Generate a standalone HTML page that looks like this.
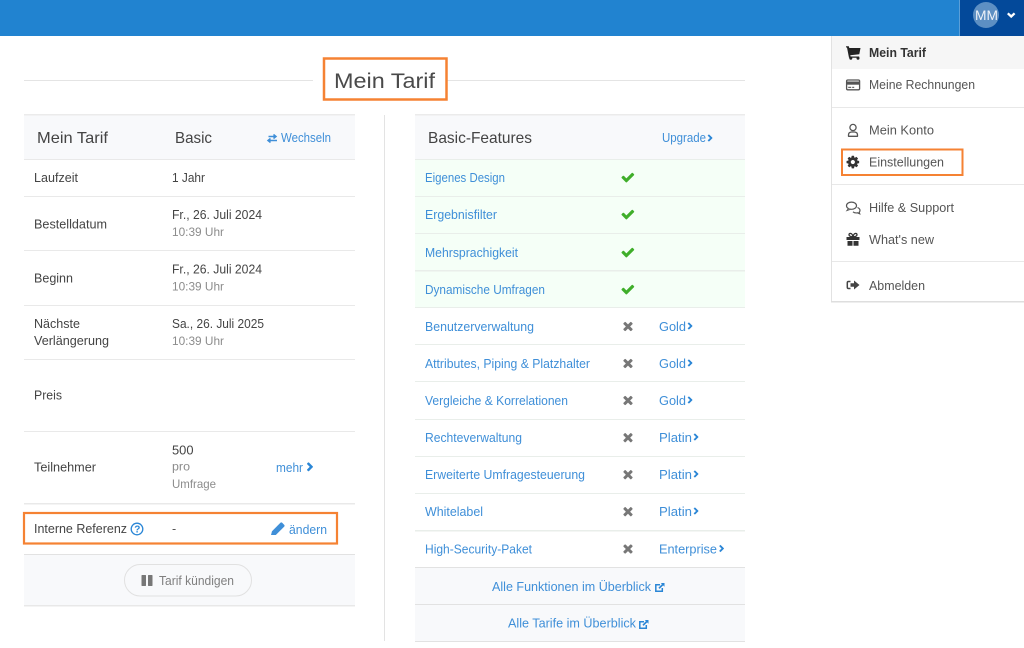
<!DOCTYPE html>
<html lang="de"><head><meta charset="utf-8"><title>Mein Tarif</title>
<style>
html,body{margin:0;padding:0;background:#fff;width:1024px;height:648px;overflow:hidden}
svg{display:block;position:absolute;left:0;top:0;filter:blur(.25px)}
text{font-family:"Liberation Sans",sans-serif;font-size:12.5px;fill:#444}
.h{font-size:16px;fill:#444}
.g{fill:#8c8c8c;font-size:12px}
.l{fill:#3f8fd8}
.m{fill:#555}
</style></head><body>
<svg width="1024" height="648" viewBox="0 0 1024 648" xmlns="http://www.w3.org/2000/svg">
<defs>
<path id="chk" d="M1671 566q0 40-28 68l-724 724-136 136q-28 28-68 28t-68-28l-136-136-362-362q-28-28-28-68t28-68l136-136q28-28 68-28t68 28l294 295 656-657q28-28 68-28t68 28l136 136q28 28 28 68z"/>
<path id="tim" d="M1490 1322q0 40-28 68l-136 136q-28 28-68 28t-68-28l-294-294-294 294q-28 28-68 28t-68-28l-136-136q-28-28-28-68t28-68l294-294-294-294q-28-28-28-68t28-68l136-136q28-28 68-28t68 28l294 294 294-294q28-28 68-28t68 28l136 136q28 28 28 68t-28 68l-294 294 294 294q28 28 28 68z"/>
<path id="chv" d="M1363 877l-742 742q-19 19-45 19t-45-19l-166-166q-19-19-19-45t19-45l531-531-531-531q-19-19-19-45t19-45l166-166q19-19 45-19t45 19l742 742q19 19 19 45t-19 45z" stroke="#2a86d6" stroke-width="110"/>
<g id="ext">
<path d="M660 584.700h-4.200v6.500h6.500v-3.200" fill="none" stroke="#2a86d6" stroke-width="1.500"/>
<path d="M659 588.300l3.700-3.700" fill="none" stroke="#2a86d6" stroke-width="1.700"/>
<path d="M660.800 583h3.700v3.700z" fill="#2a86d6"/>
</g>
</defs>

<!-- navbar -->
<rect width="1024" height="36" fill="#2183d0"/>
<rect x="959" width="1" height="36" fill="#5a9fd8"/>
<rect x="960" width="64" height="36" fill="#03499a"/>
<circle cx="986" cy="15" r="13" fill="#5d8fc3"/>
<text x="975" y="20" textLength="23" lengthAdjust="spacingAndGlyphs" style="font-size:13.500px;fill:#eef2f8">MM</text>
<path d="M1007.800 13.300l3.400 3.200 3.400-3.200" fill="none" stroke="#fff" stroke-width="2.300"/>

<!-- title -->
<rect x="24" y="80" width="289" height="1" fill="#e4e4e4"/>
<rect x="447" y="80" width="298" height="1" fill="#e4e4e4"/>
<rect x="324" y="58.500" width="122.500" height="41" fill="#fff" stroke="#f58233" stroke-width="2.500"/>
<text x="334" y="88" textLength="101" lengthAdjust="spacingAndGlyphs" style="font-size:21.500px;fill:#4a4a4a">Mein Tarif</text>

<!-- divider -->
<rect x="384" y="115" width="1" height="526" fill="#e3e3e3"/>

<!-- left table -->
<rect x="24" y="114" width="331" height="46" fill="#f8f9fb"/>
<rect x="24" y="114" width="331" height="1.500" fill="#ebebeb"/>
<g fill="#e9e9e9">
<rect x="24" y="159" width="331" height="1"/>
<rect x="24" y="196" width="331" height="1"/>
<rect x="24" y="250" width="331" height="1"/>
<rect x="24" y="305" width="331" height="1"/>
<rect x="24" y="359" width="331" height="1"/>
<rect x="24" y="431" width="331" height="1"/>
<rect x="24" y="503" width="331" height="1.500"/>
</g>
<rect x="24" y="554" width="331" height="52" fill="#f8f9fb"/>
<rect x="24" y="554" width="331" height="1" fill="#e2e2e2"/>
<rect x="24" y="605" width="331" height="1.500" fill="#e8e8e8"/>

<text class="h" x="37" y="143" textLength="71" lengthAdjust="spacingAndGlyphs">Mein Tarif</text>
<text class="h" x="175" y="143" textLength="37" lengthAdjust="spacingAndGlyphs">Basic</text>
<path d="M268.500 136.500h7M273.500 134.500l2.500 2-2.500 2M277 140.500h-8M270.500 138.500l-2.500 2 2.500 2" fill="none" stroke="#3f8fd8" stroke-width="1.500"/>
<text class="l" x="281" y="142" textLength="50" lengthAdjust="spacingAndGlyphs">Wechseln</text>

<text x="34" y="182" textLength="44" lengthAdjust="spacingAndGlyphs">Laufzeit</text>
<text x="172" y="182" textLength="33" lengthAdjust="spacingAndGlyphs">1 Jahr</text>

<text x="34" y="228.500" textLength="73" lengthAdjust="spacingAndGlyphs">Bestelldatum</text>
<text x="172" y="219" textLength="90" lengthAdjust="spacingAndGlyphs">Fr., 26. Juli 2024</text>
<text class="g" x="172" y="236" textLength="52" lengthAdjust="spacingAndGlyphs">10:39 Uhr</text>

<text x="34" y="282.500" textLength="39" lengthAdjust="spacingAndGlyphs">Beginn</text>
<text x="172" y="273.500" textLength="90" lengthAdjust="spacingAndGlyphs">Fr., 26. Juli 2024</text>
<text class="g" x="172" y="290.500" textLength="52" lengthAdjust="spacingAndGlyphs">10:39 Uhr</text>

<text x="34" y="328" textLength="46" lengthAdjust="spacingAndGlyphs">Nächste</text>
<text x="34" y="345" textLength="75" lengthAdjust="spacingAndGlyphs">Verlängerung</text>
<text x="172" y="328" textLength="92" lengthAdjust="spacingAndGlyphs">Sa., 26. Juli 2025</text>
<text class="g" x="172" y="345" textLength="52" lengthAdjust="spacingAndGlyphs">10:39 Uhr</text>

<text x="34" y="399.500" textLength="28" lengthAdjust="spacingAndGlyphs">Preis</text>

<text x="34" y="471.500" textLength="62" lengthAdjust="spacingAndGlyphs">Teilnehmer</text>
<text x="172" y="454.500" textLength="21.500" lengthAdjust="spacingAndGlyphs" style="font-size:12.500px">500</text>
<text class="g" x="172" y="470.500" textLength="18" lengthAdjust="spacingAndGlyphs">pro</text>
<text class="g" x="172" y="488" textLength="44" lengthAdjust="spacingAndGlyphs">Umfrage</text>
<text class="l" x="276" y="472" textLength="27" lengthAdjust="spacingAndGlyphs">mehr</text>
<use href="#chv" transform="translate(305.500 462.500) scale(.0052)" fill="#2a86d6"/>

<rect x="24" y="513" width="313" height="30.500" fill="#fff" stroke="#f58233" stroke-width="2.200"/>
<text x="34" y="533" textLength="93" lengthAdjust="spacingAndGlyphs">Interne Referenz</text>
<circle cx="137" cy="529" r="5.800" fill="none" stroke="#2a86d6" stroke-width="1.300"/>
<text x="134.200" y="532.700" style="font-size:10px;fill:#2a86d6;font-weight:bold">?</text>
<text x="172" y="533" class="m">-</text>
<path d="M271 535l1-3.800 8.300-8.300q1-1 2 0l1.800 1.800q1 1 0 2l-8.300 8.300z" fill="#3f8fd8"/>
<text class="l" x="289" y="534" textLength="38" lengthAdjust="spacingAndGlyphs">ändern</text>

<rect x="124.500" y="564.500" width="127" height="31.500" rx="15.700" fill="#f8f9fb" stroke="#e1e1e1"/>
<rect x="141.500" y="575" width="4.500" height="11" rx=".6" fill="#777"/>
<rect x="148" y="575" width="4.500" height="11" rx=".6" fill="#777"/>
<text x="159" y="585" textLength="75" lengthAdjust="spacingAndGlyphs" style="font-size:12.500px;fill:#808080">Tarif kündigen</text>

<!-- right table -->
<rect x="415" y="114" width="330" height="46" fill="#f8f9fb"/>
<rect x="415" y="114" width="330" height="1.500" fill="#ebebeb"/>
<rect x="415" y="160" width="330" height="147" fill="#f5fff7"/>
<g fill="#e9eeea">
<rect x="415" y="159" width="330" height="1"/>
<rect x="415" y="196" width="330" height="1"/>
<rect x="415" y="233" width="330" height="1"/>
<rect x="415" y="270" width="330" height="1.500"/>
<rect x="415" y="307" width="330" height="1"/>
<rect x="415" y="344" width="330" height="1"/>
<rect x="415" y="381" width="330" height="1"/>
<rect x="415" y="419" width="330" height="1"/>
<rect x="415" y="456" width="330" height="1"/>
<rect x="415" y="493" width="330" height="1"/>
<rect x="415" y="530" width="330" height="1.500"/>
</g>
<rect x="415" y="567" width="330" height="75" fill="#f8f9fb"/>
<rect x="415" y="567" width="330" height="1" fill="#e2e2e2"/>
<rect x="415" y="604" width="330" height="1" fill="#e2e2e2"/>
<rect x="415" y="641" width="330" height="1" fill="#e2e2e2"/>

<text class="h" x="428" y="143" textLength="104" lengthAdjust="spacingAndGlyphs">Basic-Features</text>
<text class="l" x="662" y="142" textLength="44" lengthAdjust="spacingAndGlyphs">Upgrade</text>
<use href="#chv" transform="translate(706.500 134.500) scale(.0042)" fill="#2a86d6"/>

<text class="l" x="425" y="182" textLength="80" lengthAdjust="spacingAndGlyphs" style="font-size:13px">Eigenes Design</text>
<text class="l" x="425" y="219" textLength="72" lengthAdjust="spacingAndGlyphs">Ergebnisfilter</text>
<text class="l" x="425" y="257" textLength="93" lengthAdjust="spacingAndGlyphs" style="font-size:13px">Mehrsprachigkeit</text>
<text class="l" x="425" y="294" textLength="120" lengthAdjust="spacingAndGlyphs" style="font-size:13px">Dynamische Umfragen</text>
<text class="l" x="425" y="331" textLength="109" lengthAdjust="spacingAndGlyphs">Benutzerverwaltung</text>
<text class="l" x="425" y="368" textLength="165" lengthAdjust="spacingAndGlyphs">Attributes, Piping &amp; Platzhalter</text>
<text class="l" x="425" y="405" textLength="143" lengthAdjust="spacingAndGlyphs">Vergleiche &amp; Korrelationen</text>
<text class="l" x="425" y="442" textLength="97" lengthAdjust="spacingAndGlyphs">Rechteverwaltung</text>
<text class="l" x="425" y="479" textLength="160" lengthAdjust="spacingAndGlyphs">Erweiterte Umfragesteuerung</text>
<text class="l" x="425" y="516" textLength="58" lengthAdjust="spacingAndGlyphs">Whitelabel</text>
<text class="l" x="425" y="553.500" textLength="107" lengthAdjust="spacingAndGlyphs">High-Security-Paket</text>

<g fill="#3fae2a">
<use href="#chk" transform="translate(620.500 170) scale(.0082)"/>
<use href="#chk" transform="translate(620.500 207) scale(.0082)"/>
<use href="#chk" transform="translate(620.500 245) scale(.0082)"/>
<use href="#chk" transform="translate(620.500 282) scale(.0082)"/>
</g>
<g fill="#777">
<use href="#tim" transform="translate(621 319) scale(.0078)"/>
<use href="#tim" transform="translate(621 356) scale(.0078)"/>
<use href="#tim" transform="translate(621 393) scale(.0078)"/>
<use href="#tim" transform="translate(621 430.200) scale(.0078)"/>
<use href="#tim" transform="translate(621 467.200) scale(.0078)"/>
<use href="#tim" transform="translate(621 504.200) scale(.0078)"/>
<use href="#tim" transform="translate(621 541.500) scale(.0078)"/>
</g>
<text class="l" x="659" y="331" textLength="27" lengthAdjust="spacingAndGlyphs">Gold</text>
<text class="l" x="659" y="368" textLength="27" lengthAdjust="spacingAndGlyphs">Gold</text>
<text class="l" x="659" y="405" textLength="27" lengthAdjust="spacingAndGlyphs">Gold</text>
<text class="l" x="659" y="442" textLength="33" lengthAdjust="spacingAndGlyphs">Platin</text>
<text class="l" x="659" y="479" textLength="33" lengthAdjust="spacingAndGlyphs">Platin</text>
<text class="l" x="659" y="516" textLength="33" lengthAdjust="spacingAndGlyphs">Platin</text>
<text class="l" x="659" y="553.500" textLength="58" lengthAdjust="spacingAndGlyphs">Enterprise</text>
<g fill="#2a86d6">
<use href="#chv" transform="translate(686.500 322.500) scale(.0042)"/>
<use href="#chv" transform="translate(686.500 359.500) scale(.0042)"/>
<use href="#chv" transform="translate(686.500 396.500) scale(.0042)"/>
<use href="#chv" transform="translate(692.500 433.500) scale(.0042)"/>
<use href="#chv" transform="translate(692.500 470.500) scale(.0042)"/>
<use href="#chv" transform="translate(692.500 507.500) scale(.0042)"/>
<use href="#chv" transform="translate(718 545) scale(.0042)"/>
</g>
<text class="l" x="492" y="591" textLength="159" lengthAdjust="spacingAndGlyphs">Alle Funktionen im Überblick</text>
<use href="#ext"/>
<text class="l" x="508" y="627.500" textLength="128" lengthAdjust="spacingAndGlyphs">Alle Tarife im Überblick</text>
<use href="#ext" transform="translate(-16 37)"/>

<!-- dropdown -->
<rect x="831" y="36" width="193" height="266" fill="#fff"/>
<rect x="831" y="36" width="1" height="266" fill="#e2e2e2"/>
<rect x="831" y="301" width="193" height="1.500" fill="#dedede"/>
<rect x="832" y="36" width="192" height="33" fill="#f6f6f6"/>
<g fill="#e8e8e8">
<rect x="832" y="107" width="192" height="1"/>
<rect x="832" y="184" width="192" height="1"/>
<rect x="832" y="261" width="192" height="1"/>
</g>
<!-- cart -->
<path d="M846 46.300h2.800l.5 1.700h11.200l-1.200 6.300-9 1 .3 1.200h8.600v1.300h-10.200l-2-10.300h-.9z" fill="#222"/>
<circle cx="850.800" cy="58.300" r="1.500" fill="#222"/>
<circle cx="858" cy="58.300" r="1.500" fill="#222"/>
<!-- card -->
<rect x="846.600" y="80" width="13" height="9.800" rx="1.200" fill="none" stroke="#555" stroke-width="1.300"/>
<rect x="846.600" y="81.500" width="13" height="3.200" fill="#555"/>
<rect x="848.200" y="86.800" width="3" height="1.100" fill="#555"/>
<rect x="852.200" y="86.800" width="2" height="1.100" fill="#555"/>
<!-- user -->
<circle cx="853" cy="127.500" r="3.100" fill="none" stroke="#555" stroke-width="1.300"/>
<path d="M848.500 136.300v-1.300q0-2.800 3-3h3q3 .2 3 3v1.300z" fill="none" stroke="#555" stroke-width="1.300" stroke-linejoin="round"/>
<!-- cog -->
<path d="M1152 896q0-106-75-181t-181-75-181 75-75 181 75 181 181 75 181-75 75-181zm512-109v222q0 12-8 23t-20 13l-185 28q-19 54-39 91 35 50 107 138 10 12 10 25t-9 23q-27 37-99 108t-94 71q-12 0-26-9l-138-108q-44 23-91 38-16 136-29 186-7 28-36 28h-222q-14 0-24.500-8.500t-11.500-21.500l-28-184q-49-16-90-37l-141 107q-10 9-25 9-14 0-25-11-126-114-165-168-7-10-7-23 0-12 8-23 15-21 51-66.500t54-70.500q-27-50-41-99l-183-27q-13-2-21-12.500t-8-23.500v-222q0-12 8-23t19-13l186-28q14-46 39-92-40-57-107-138-10-12-10-24 0-10 9-23 26-36 98.500-107.500t94.500-71.500q13 0 26 10l138 107q44-23 91-38 16-136 29-186 7-28 36-28h222q14 0 24.500 8.500t11.500 21.500l28 184q49 16 90 37l142-107q9-9 24-9 13 0 25 10 129 119 165 170 7 8 7 22 0 12-8 23-15 21-51 66.500t-54 70.500q26 50 41 98l183 28q13 2 21 12.500t8 23.500z" transform="translate(845.500 154.700) scale(.0082)" fill="#333"/>
<!-- comments -->
<path d="M857.500 207.500q2.500 1 2.500 3 0 1-.8 1.800l.5 1.500-2.200-1q-2.800.5-4.500-1" fill="none" stroke="#555" stroke-width="1.200"/>
<ellipse cx="851.500" cy="205.700" rx="5" ry="3.600" fill="#fff" stroke="#555" stroke-width="1.200"/>
<path d="M848.500 208.500l-1.500 2 3.500-1.200" fill="#fff" stroke="#555" stroke-width="1"/>
<!-- gift -->
<path d="M846.500 237h13v3h-13zM847.500 241h5v4.800h-5zM853.500 241h5v4.800h-5z" fill="#333"/>
<path d="M853 237q-4-.5-4-2.200 0-1.600 1.800-1.300 1.700.3 2.200 3.500zm0 0q4-.5 4-2.200 0-1.600-1.800-1.300-1.700.3-2.200 3.500z" fill="none" stroke="#333" stroke-width="1.300"/>
<!-- sign out -->
<path d="M850.500 281.500h-2q-1.200 0-1.200 1.200v4.600q0 1.200 1.200 1.200h2" fill="none" stroke="#444" stroke-width="1.500"/>
<path d="M850.500 283.300h3.500v-2.800l5.500 4.500-5.500 4.500v-2.800h-3.500z" fill="#444"/>

<text x="869" y="57" textLength="57" lengthAdjust="spacingAndGlyphs" style="font-weight:bold;fill:#333">Mein Tarif</text>
<text x="869" y="89" textLength="106" lengthAdjust="spacingAndGlyphs" class="m">Meine Rechnungen</text>
<text x="869" y="134.500" textLength="65" lengthAdjust="spacingAndGlyphs" class="m">Mein Konto</text>
<rect x="842" y="149.500" width="120.500" height="25.500" fill="none" stroke="#f58233" stroke-width="2"/>
<text x="869" y="166.500" textLength="75" lengthAdjust="spacingAndGlyphs" class="m">Einstellungen</text>
<text x="869" y="212" textLength="85" lengthAdjust="spacingAndGlyphs" class="m">Hilfe &amp; Support</text>
<text x="869" y="244" textLength="65" lengthAdjust="spacingAndGlyphs" class="m">What's new</text>
<text x="869" y="290" textLength="56" lengthAdjust="spacingAndGlyphs" class="m">Abmelden</text>
</svg>
</body></html>
